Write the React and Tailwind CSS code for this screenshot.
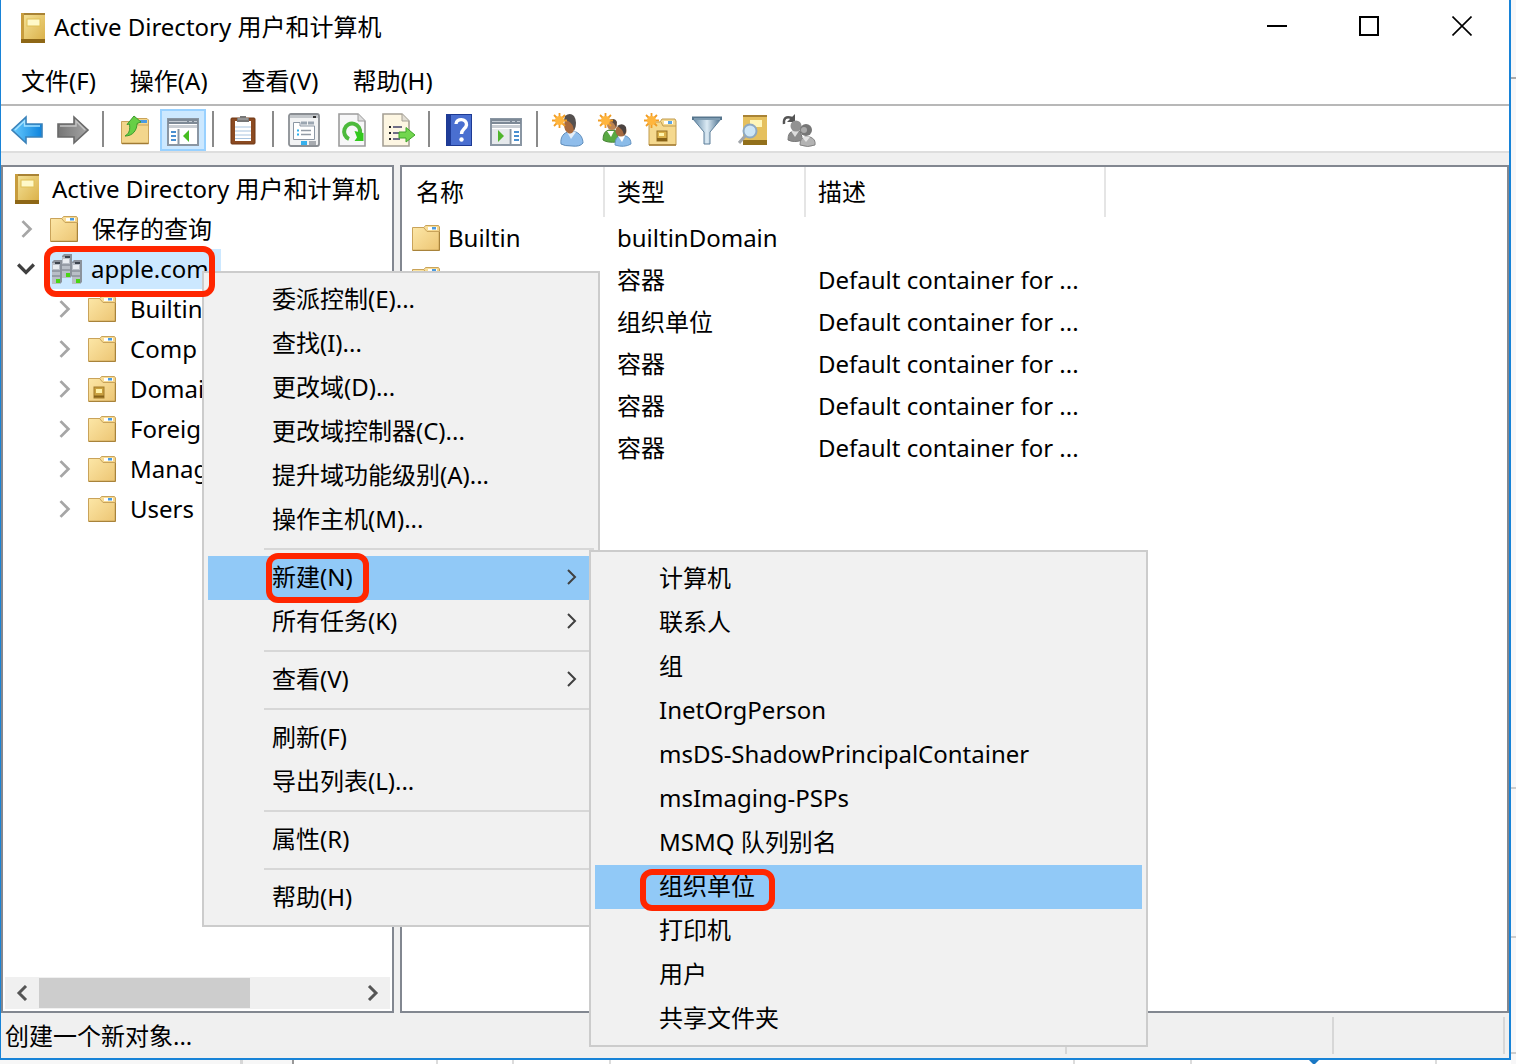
const BookIcon = ({ className = "w-[26px] h-[30px]" }) => (
  <svg viewBox="0 0 26 30" className={className} aria-hidden="true">
    <defs>
      <linearGradient id="book" x1="0" x2="1" y1="0" y2="1">
        <stop offset="0" stopColor="#f6e59c" />
        <stop offset="1" stopColor="#d9ae45" />
      </linearGradient>
    </defs>
    <rect x="1" y="0" width="24" height="30" fill="url(#book)" />
    <rect x="1" y="0" width="24" height="2" fill="#a98335" />
    <rect x="1" y="0" width="3" height="30" fill="#c79c3d" />
    <rect x="1" y="26" width="24" height="4" fill="#8e6716" />
    <rect x="7" y="6" width="13" height="7" fill="#fff9c9" stroke="#dfc056" />
  </svg>
);

const FolderIcon = ({ domain = false }) => (
  <svg viewBox="0 0 28 26" className="w-7 h-[26px] shrink-0" aria-hidden="true">
    <defs>
      <linearGradient id="folder" x1="0" x2="1" y1="0" y2="1">
        <stop offset="0" stopColor="#fde8a9" />
        <stop offset="1" stopColor="#ecc573" />
      </linearGradient>
    </defs>
    <path d="M.5 2.5H12L13.500 .5H26.500L27.500 2V25.500H.5Z" fill="url(#folder)" stroke="#c9a35a" />
    <path d="M12 3L15 6.500H27.500" fill="none" stroke="#c9a35a" />
    <rect x="16" y="2" width="9" height="3" fill="#fff" />
    <rect x="20" y="2" width="4" height="2.500" fill="#4c9be0" />
    <path d="M1 25.300H27.500M27.300 7V25" stroke="#a07b34" />
    {domain && (
      <g>
        <rect x="6" y="11" width="10" height="11" fill="#c9a040" stroke="#a47d2a" />
        <rect x="8" y="13" width="6" height="4" fill="#fff1a8" />
        <path d="M6 20.500H16" stroke="#86621a" strokeWidth="2" />
      </g>
    )}
  </svg>
);

const ServersIcon = () => (
  <svg viewBox="0 0 32 32" className="w-8 h-8 shrink-0" aria-hidden="true">
    {[[11, 1], [1, 7], [21, 7]].map(([x, y]) => (
      <g key={x}>
        <path d={`M${x} ${y + 2}L${x + 2} ${y}H${x + 10}V${y + 22}L${x + 8} ${y + 24}H${x}Z`} fill="#8b929b" />
        <rect x={x} y={y + 3} width="8" height="21" fill="#b9bfc7" />
        <rect x={x + 1} y={y + 5} width="6" height="4" fill="#e9edf1" />
        <rect x={x + 3} y={y + 2} width="5" height="2" fill="#3d444d" />
        <path d={`M${x} ${y + 11}H${x + 8}M${x} ${y + 16}H${x + 8}`} stroke="#747b84" />
        <rect x={x + 4} y={y + 19} width="4" height="4" fill="#49d414" />
      </g>
    ))}
  </svg>
);

const BackIcon = () => (
  <svg viewBox="0 0 32 30" className="w-8 h-[30px]" aria-hidden="true">
    <defs>
      <linearGradient id="back" x1="0" x2="1">
        <stop offset="0" stopColor="#69ccff" />
        <stop offset="1" stopColor="#0d83dd" />
      </linearGradient>
    </defs>
    <path d="M1 15L15 2V9H31V22H15V28Z" fill="url(#back)" stroke="#3b82b9" strokeWidth="1.600" />
    <path d="M4 15L13.500 6V11H29" fill="none" stroke="#a3e1ff" strokeWidth="1.400" />
  </svg>
);

const ForwardIcon = () => (
  <svg viewBox="0 0 32 30" className="w-8 h-[30px]" aria-hidden="true">
    <defs>
      <linearGradient id="forward" x1="0" x2="1">
        <stop offset="0" stopColor="#757575" />
        <stop offset="1" stopColor="#a5a5a5" />
      </linearGradient>
    </defs>
    <path d="M31 15L17 2V9H1V22H17V28Z" fill="url(#forward)" stroke="#696969" strokeWidth="1.600" />
    <path d="M3 11H19V6L28 15" fill="none" stroke="#c4c4c4" strokeWidth="1.400" />
  </svg>
);

const UpFolderIcon = () => (
  <svg viewBox="0 0 30 30" className="w-[30px] h-[30px]" aria-hidden="true">
    <path d="M1.500 6.500H15L17 3.500H27L28.500 5V28.500H1.500Z" fill="#f3d68c" stroke="#c9a35a" />
    <path d="M15 7L18 10H28.500" fill="none" stroke="#c9a35a" />
    <rect x="20" y="5" width="7" height="3" fill="#4c9be0" />
    <path d="M2 28.500H28.500" stroke="#a07b34" strokeWidth="1.500" />
    <path d="M5 21C10 18 10 14 9.500 9L7 9.500L14 1L21 7L17 8.500C17 15 13 21 5 21Z" fill="#67cf45" stroke="#3c9a2c" />
  </svg>
);

const ConsoleTreeIcon = ({ flip = false }) => (
  <svg viewBox="0 0 32 28" className="w-8 h-7 mt-1" aria-hidden="true">
    <rect x="1" y="1" width="30" height="26" fill="#fff" stroke="#8a96a3" strokeWidth="2" />
    <rect x="1" y="1" width="30" height="5" fill="#7d8996" />
    <path d="M2 3.500H20M22 3.500H25M27 3.500H30" stroke="#c4ccd4" />
    <path d="M2 8.500H30" stroke="#c9ced4" strokeWidth="3" />
    {flip ? (
      <g>
        <path d="M20.500 11V26" stroke="#8a96a3" strokeWidth="2" />
        <rect x="2" y="11" width="17" height="15" fill="#e6e9ec" />
        <path d="M24 14H29M24 18H29M24 22H29" stroke="#4a8fd0" strokeWidth="1.800" />
        <path d="M8 12L14 18L8 24Z" fill="#4fb52c" />
      </g>
    ) : (
      <g>
        <path d="M11.500 11V26" stroke="#8a96a3" strokeWidth="2" />
        <path d="M4 14H9M4 18H9M4 22H9" stroke="#4a8fd0" strokeWidth="1.800" />
        <path d="M22 12L16 18L22 24Z" fill="#45bd20" />
      </g>
    )}
  </svg>
);

const ClipboardIcon = () => (
  <svg viewBox="0 0 26 30" className="w-[26px] h-[30px]" aria-hidden="true">
    <rect x="1" y="3" width="24" height="26" rx="1" fill="#8b4a21" stroke="#6e3615" />
    <rect x="5" y="6" width="16" height="20" fill="#fff" />
    <path d="M5 12H21M5 16H21M5 20H21M5 23.500H21" stroke="#a9c4df" />
    <path d="M7 3H10V1H16V3H19V7H7Z" fill="#777" />
    <path d="M8 4H18" stroke="#b4b4b4" />
  </svg>
);

const PropertiesIcon = () => (
  <svg viewBox="0 0 32 34" className="w-8 h-[34px]" aria-hidden="true">
    <rect x="1" y="1" width="30" height="32" rx="2" fill="#f2f3f4" stroke="#8b8f94" strokeWidth="1.800" />
    <rect x="2" y="2" width="28" height="3" fill="#c3c7cb" />
    <path d="M25 4H28" stroke="#333" strokeWidth="2" />
    <path d="M5.500 9.500H12V13H26.500V26.500H5.500Z" fill="#fff" stroke="#8b96a3" />
    <path d="M13 10H19M20 10H26" stroke="#9ba6b1" strokeWidth="3" />
    <path d="M9 17.500H11M9 21.500H11" stroke="#2ab0ee" strokeWidth="2" />
    <path d="M13 17.500H23M13 21.500H23" stroke="#929ba5" strokeWidth="1.500" />
    <rect x="13" y="28" width="6" height="4" fill="#36b1ee" />
    <rect x="21" y="28" width="7" height="4" fill="#a7abb0" />
  </svg>
);

const RefreshIcon = () => (
  <svg viewBox="0 0 28 34" className="w-7 h-[34px]" aria-hidden="true">
    <path d="M1 1H20L27 8V33H1Z" fill="#f7f7f8" stroke="#9c9c9c" strokeWidth="1.600" />
    <path d="M20 1V8H27" fill="#ddd" stroke="#9c9c9c" />
    <path d="M11 26A8 8 0 1 1 22 20" fill="none" stroke="#4cba3c" strokeWidth="4" />
    <path d="M16.500 18L25.500 20V28H16.500L19 24.500Z" fill="#32c91e" />
  </svg>
);

const ExportIcon = () => (
  <svg viewBox="0 0 34 34" className="w-[34px] h-[34px]" aria-hidden="true">
    <path d="M1 1H20L27 8V33H1Z" fill="#fdf6e2" stroke="#a5a095" strokeWidth="1.600" />
    <path d="M20 1V8H27" fill="#e2ded4" stroke="#a5a095" />
    <path d="M7 14H9M7 20H9M7 26H9" stroke="#222" strokeWidth="2" />
    <path d="M11 14H20M11 20H18M11 26H18" stroke="#6f6d86" strokeWidth="1.800" />
    <path d="M17 19H24V14.500L33 22L24 29V25H17Z" fill="#73d64e" stroke="#3fa52b" />
  </svg>
);

const HelpIcon = () => (
  <svg viewBox="0 0 26 32" className="w-[26px] h-8" aria-hidden="true">
    <rect width="26" height="32" fill="#4a6fd0" />
    <rect width="5" height="32" fill="#1f3c98" />
    <rect x=".5" y=".5" width="25" height="31" fill="none" stroke="#1d3a94" />
    <path d="M10 10C10 4 21 4 20.500 11C20 15 15.500 15 15.500 20" fill="none" stroke="#fff" strokeWidth="3.400" />
    <circle cx="15.500" cy="25.500" r="2.200" fill="#fff" />
  </svg>
);

const Spark = () => (
  <g>
    <path d="M7.500 0V15M0 7.500H15M2 2L13 13M13 2L2 13" stroke="#f19d25" strokeWidth="1.800" />
    <circle cx="7.500" cy="7.500" r="4.500" fill="#ffb53d" />
  </g>
);

const NewUserIcon = () => (
  <svg viewBox="0 0 32 34" className="w-8 h-[34px]" aria-hidden="true">
    <path d="M9 31C8 24 12 19 17 19H24C29 21 31 26 31 30Q28 34 20 33Q12 33 9 31Z" fill="#8fbdeb" stroke="#5f8dbb" />
    <path d="M15 19L19 26L24 19Z" fill="#e4eef8" />
    <path d="M13 7H22Q25 12 22 17Q20 22 16 20Q12 17 12 12Z" fill="#a96a3e" />
    <path d="M13 3Q18-1 22 3Q26 9 22 18Q21 10 16 8L12 7Z" fill="#55504f" />
    <Spark />
  </svg>
);

const NewGroupIcon = () => (
  <svg viewBox="0 0 34 34" className="w-[34px] h-[34px]" aria-hidden="true">
    <path d="M5 27Q5 18 11 17H17L21 25L19 29Q9 30 5 27Z" fill="#58a942" stroke="#488336" />
    <path d="M9 18L13 24L16 18Z" fill="#fff" />
    <circle cx="14" cy="12" r="5" fill="#bd8453" />
    <path d="M11 7Q17 4 19 9L18 15Q17 10 11 7Z" fill="#5b4a40" />
    <path d="M17 32Q17 24 22 23H28Q33 25 33 31Q26 35 17 32Z" fill="#8bbce9" stroke="#6594c2" />
    <path d="M20 23L24 29L27 23Z" fill="#fff" />
    <circle cx="23" cy="18" r="5.500" fill="#a66a40" />
    <path d="M19 13Q25 9 28 14Q29 19 26 22Q25 16 19 13Z" fill="#4b4340" />
    <Spark />
  </svg>
);

const NewOuIcon = () => (
  <svg viewBox="0 0 34 34" className="w-[34px] h-[34px]" aria-hidden="true">
    <path d="M5 9H16L18 6H31L32 8V32H5Z" fill="#f5d98f" stroke="#c29c4f" />
    <path d="M17 9L19 13H32" fill="none" stroke="#c29c4f" />
    <rect x="20" y="8" width="9" height="3" fill="#fff" />
    <rect x="24" y="8" width="4" height="3" fill="#5ba6e5" />
    <rect x="13" y="18" width="10" height="10" fill="#dbb14b" stroke="#967124" />
    <rect x="15" y="20" width="5" height="3" fill="#fff5ad" />
    <path d="M13 26.500H23" stroke="#876217" strokeWidth="3" />
    <path d="M5 32H32" stroke="#a47d36" strokeWidth="1.500" />
    <Spark />
  </svg>
);

const FilterIcon = () => (
  <svg viewBox="0 0 30 30" className="w-[30px] h-[30px]" aria-hidden="true">
    <defs>
      <linearGradient id="funnel" x1="0" x2="1">
        <stop offset="0" stopColor="#6188a6" />
        <stop offset=".5" stopColor="#dcebf5" />
        <stop offset="1" stopColor="#486d8b" />
      </linearGradient>
    </defs>
    <path d="M1 4L12 17V29H18V17L29 4Z" fill="url(#funnel)" stroke="#5d7f9a" />
    <path d="M0 1.500H30V5H0Z" fill="#56758d" />
    <path d="M2 4H28" stroke="#a7c3d5" />
  </svg>
);

const FindIcon = () => (
  <svg viewBox="0 0 30 32" className="w-[30px] h-8" aria-hidden="true">
    <rect x="5" y="1" width="24" height="30" fill="#e5c05e" />
    <rect x="5" y="1" width="24" height="2" fill="#a98335" />
    <rect x="5" y="26" width="24" height="5" fill="#92701b" />
    <rect x="12" y="6" width="12" height="7" fill="#fff6b9" />
    <path d="M1 29L8 21" stroke="#a2a6aa" strokeWidth="3" />
    <circle cx="12" cy="17" r="6.500" fill="#cde6f7" stroke="#8fa9c1" strokeWidth="2" />
  </svg>
);

const AddToGroupIcon = () => (
  <svg viewBox="0 0 34 34" className="w-[34px] h-[34px]" aria-hidden="true">
    <path d="M2 11Q1 2 10 5" fill="none" stroke="#555" strokeWidth="2.400" />
    <path d="M13 1V9H5Z" fill="#555" />
    <path d="M6 27Q6 19 11 18H18L21 27Q12 30 6 27Z" fill="#8c8c8c" stroke="#777" />
    <path d="M9 18L13 24L17 18" fill="#ddd" />
    <circle cx="14" cy="13" r="5.500" fill="#929292" />
    <path d="M18 32Q18 25 23 24H28Q34 26 33 32Q26 35 18 32Z" fill="#b3b3b3" stroke="#838383" />
    <circle cx="24" cy="17" r="6" fill="#777" />
    <circle cx="22" cy="17" r="3" fill="#aaa" />
    <path d="M20 24L24 29L28 24" fill="#e4e4e4" />
  </svg>
);

const Chevron = ({ dir = "right", size = "w-4 h-4", className = "" }) => {
  const paths = {
    right: "M4 1L11 8L4 15",
    left: "M12 1L5 8L12 15",
    down: "M1 4L8 11L15 4",
  };
  return (
    <svg viewBox="0 0 16 16" className={`${size} shrink-0 ${className}`} fill="none" stroke="currentColor" aria-hidden="true">
      <path d={paths[dir]} />
    </svg>
  );
};

const menuBar = ["文件(F)", "操作(A)", "查看(V)", "帮助(H)"];

const tree = [
  { name: "Builtin" },
  { name: "Comp" },
  { name: "Domai", domain: true },
  { name: "Foreig" },
  { name: "Manag" },
  { name: "Users" },
];

const rows = [
  { name: "Builtin", type: "builtinDomain" },
  { type: "容器", desc: "Default container for ..." },
  { type: "组织单位", desc: "Default container for ..." },
  { type: "容器", desc: "Default container for ..." },
  { type: "容器", desc: "Default container for ..." },
  { type: "容器", desc: "Default container for ..." },
];

const contextMenu = [
  { label: "委派控制(E)..." },
  { label: "查找(I)..." },
  { label: "更改域(D)..." },
  { label: "更改域控制器(C)..." },
  { label: "提升域功能级别(A)..." },
  { label: "操作主机(M)..." },
  null,
  { label: "新建(N)", sub: true, active: true },
  { label: "所有任务(K)", sub: true },
  null,
  { label: "查看(V)", sub: true },
  null,
  { label: "刷新(F)" },
  { label: "导出列表(L)..." },
  null,
  { label: "属性(R)" },
  null,
  { label: "帮助(H)" },
];

const newMenu = [
  "计算机",
  "联系人",
  "组",
  "InetOrgPerson",
  "msDS-ShadowPrincipalContainer",
  "msImaging-PSPs",
  "MSMQ 队列别名",
  "组织单位",
  "打印机",
  "用户",
  "共享文件夹",
];

function TitleBar() {
  return (
    <header className="flex items-center h-14 pl-[19px] bg-white">
      <BookIcon />
      <h1 className="ml-2 pb-[2px] flex-1 whitespace-nowrap">Active Directory 用户和计算机</h1>
      <div className="flex h-full pb-1">
        <button aria-label="最小化" className="w-[92px] grid place-items-center">
          <svg viewBox="0 0 20 20" className="w-5 h-5" stroke="#000" strokeWidth="2"><path d="M0 10H20" /></svg>
        </button>
        <button aria-label="最大化" className="w-[92px] grid place-items-center">
          <svg viewBox="0 0 20 20" className="w-5 h-5" fill="none" stroke="#000" strokeWidth="2"><path d="M1 1H19V19H1Z" /></svg>
        </button>
        <button aria-label="关闭" className="w-[94px] grid place-items-center">
          <svg viewBox="0 0 20 20" className="w-5 h-5" stroke="#000" strokeWidth="1.600"><path d="M.5 .5L19.500 19.500M19.500 .5L.5 19.500" /></svg>
        </button>
      </div>
    </header>
  );
}

function ToolButton({ label, width = "w-[46px]", active = false, children }) {
  return (
    <button
      aria-label={label}
      className={`${width} h-[42px] shrink-0 grid place-items-center ${active ? "bg-[#cce8ff] border-2 border-[#99d1ff]" : ""}`}
    >
      {children}
    </button>
  );
}

const Divider = () => <span className="w-[2px] h-9 mx-[6px] mb-[2px] shrink-0 bg-[#8a8a8a]" />;

function Toolbar() {
  return (
    <div role="toolbar" className="flex items-center h-[47px] pl-[3px] pt-[3px] bg-white border-b-2 border-[#dedede]">
      <ToolButton label="后退"><BackIcon /></ToolButton>
      <ToolButton label="前进"><ForwardIcon /></ToolButton>
      <Divider />
      <ToolButton label="上一级" width="w-[50px]"><UpFolderIcon /></ToolButton>
      <ToolButton label="显示控制台树" active><ConsoleTreeIcon /></ToolButton>
      <Divider />
      <ToolButton label="粘贴"><ClipboardIcon /></ToolButton>
      <Divider />
      <ToolButton label="属性" width="w-12"><PropertiesIcon /></ToolButton>
      <ToolButton label="刷新" width="w-12"><RefreshIcon /></ToolButton>
      <ToolButton label="导出列表"><ExportIcon /></ToolButton>
      <Divider />
      <ToolButton label="帮助"><HelpIcon /></ToolButton>
      <ToolButton label="显示操作窗格" width="w-12"><ConsoleTreeIcon flip /></ToolButton>
      <Divider />
      <ToolButton label="新建用户" width="w-12"><NewUserIcon /></ToolButton>
      <ToolButton label="新建组"><NewGroupIcon /></ToolButton>
      <ToolButton label="新建组织单位"><NewOuIcon /></ToolButton>
      <ToolButton label="筛选器"><FilterIcon /></ToolButton>
      <ToolButton label="查找"><FindIcon /></ToolButton>
      <ToolButton label="添加到组"><AddToGroupIcon /></ToolButton>
    </div>
  );
}

function TreePane() {
  return (
    <nav className="flex flex-col w-[393px] shrink-0 bg-white border-2 border-[#828790] whitespace-nowrap">
      <ul className="flex-1 pt-[2px]">
        <li className="flex items-center h-10 pl-[11px] gap-3">
          <BookIcon />
          <span>Active Directory 用户和计算机</span>
        </li>
        <li className="flex items-center h-10 pl-[15px]">
          <Chevron size="w-[18px] h-[18px]" className="text-[#a6a6a6] stroke-[2.5]" />
          <span className="ml-[14px]"><FolderIcon /></span>
          <span className="ml-[14px]">保存的查询</span>
        </li>
        <li className="flex items-center h-10 pl-[14px]">
          <Chevron dir="down" size="w-[18px] h-[18px]" className="text-[#404040] stroke-3" />
          <span className="flex items-center h-10 ml-3 pl-1 pr-3 gap-2 bg-[#cce8ff]">
            <ServersIcon />
            apple.com
          </span>
        </li>
        {tree.map(({ name, domain }) => (
          <li key={name} className="flex items-center h-10 pl-[53px]">
            <Chevron size="w-[18px] h-[18px]" className="text-[#a6a6a6] stroke-[2.5]" />
            <span className="ml-[14px]"><FolderIcon domain={domain} /></span>
            <span className="ml-[14px]">{name}</span>
          </li>
        ))}
      </ul>
      <div className="flex items-center h-8 mx-[2px] mb-[2px] bg-[#f0f0f0] text-[#555]">
        <button aria-label="向左滚动" className="w-[34px] grid place-items-center"><Chevron dir="left" className="stroke-3" /></button>
        <span className="w-[211px] h-[30px] bg-[#cdcdcd]" />
        <button aria-label="向右滚动" className="w-[34px] ml-auto grid place-items-center"><Chevron className="stroke-3" /></button>
      </div>
    </nav>
  );
}

function ListPane() {
  return (
    <main className="flex-1 min-w-0 bg-white border-2 border-[#828790]">
      <table className="table-fixed border-collapse w-[703px] whitespace-nowrap">
        <colgroup>
          <col className="w-[202px]" />
          <col className="w-[201px]" />
          <col className="w-[300px]" />
        </colgroup>
        <thead>
          <tr className="h-[50px] text-left">
            <th className="font-normal pl-[14px] border-r-2 border-[#e5e5e5]">名称</th>
            <th className="font-normal pl-3 border-r-2 border-[#e5e5e5]">类型</th>
            <th className="font-normal pl-3 border-r-2 border-[#e5e5e5]">描述</th>
          </tr>
        </thead>
        <tbody>
          {rows.map(({ name, type, desc }, i) => (
            <tr key={i} className="h-[42px]">
              <td className="pl-[10px]">
                <span className="flex items-center gap-2"><FolderIcon />{name}</span>
              </td>
              <td className="pl-[13px]">{type}</td>
              <td className="pl-[13px]">{desc}</td>
            </tr>
          ))}
        </tbody>
      </table>
    </main>
  );
}

const Mark = ({ className }) => (
  <span className={`absolute border-[6px] border-[#ff2600] rounded-xl pointer-events-none ${className}`} />
);

function ContextMenu() {
  return (
    <div role="menu" className="absolute left-[202px] top-[271px] w-[398px] px-1 py-[5px] bg-[#f1f1f1] border-2 border-[#cccccc]">
      {contextMenu.map((item, i) =>
        item ? (
          <button
            key={item.label}
            role="menuitem"
            className={`flex items-center w-full h-11 pl-16 pr-[14px] pb-[2px] text-left ${item.active ? "bg-[#91c9f7]" : ""}`}
          >
            <span className="flex-1">{item.label}</span>
            {item.sub && <Chevron className="text-[#404040] stroke-2" />}
          </button>
        ) : (
          <div key={i} className="flex items-center h-[14px] pl-14"><hr className="flex-1 border-0 h-[2px] bg-[#d7d7d7]" /></div>
        )
      )}
    </div>
  );
}

function NewSubmenu() {
  return (
    <div role="menu" className="absolute left-[589px] top-[550px] w-[559px] px-1 pt-[5px] pb-1 bg-[#f1f1f1] border-2 border-[#cccccc]">
      {newMenu.map((label) => (
        <button
          key={label}
          role="menuitem"
          className={`flex items-center w-full h-11 pl-16 pb-[2px] text-left ${label === "组织单位" ? "bg-[#91c9f7]" : ""}`}
        >
          {label}
        </button>
      ))}
    </div>
  );
}

function StatusBar() {
  return (
    <footer className="flex h-[45px] bg-[#f0f0f0]">
      <p className="flex-1 pl-1 leading-[46px]">创建一个新对象...</p>
      <span className="w-[267px] my-1 border-l-2 border-[#d7d7d7]" />
      <span className="w-[173px] my-1 mr-1 border-x-2 border-[#d7d7d7]" />
    </footer>
  );
}

// edges of the sheet that lies behind the window
function SheetBottom() {
  return (
    <div className="flex h-1 bg-white">
      <span className="w-[243px] border-r-3 border-[#d7d7d7] bg-[#f7f7f7]" />
      <span className="w-[51px] border-r-2 border-[#999] bg-[#f7f7f7]" />
      <span className="w-36 border-r-2 border-[#dcdcdc]" />
      <span className="w-[76px] border-r-2 border-[#dcdcdc]" />
      <span className="w-[97px] border-r-2 border-[#dcdcdc]" />
      <span className="w-[464px] border-r-2 border-[#dcdcdc]" />
      <span className="w-[117px] border-r-2 border-[#dcdcdc]" />
      <span className="flex-1 grid place-items-center">
        <svg viewBox="0 0 10 4" className="w-[10px] h-1" aria-hidden="true"><path d="M0 0H10L6 4H4Z" fill="#1a78c4" /></svg>
      </span>
      <span className="w-[76px] border-l-2 border-[#dcdcdc]" />
    </div>
  );
}

function SheetRight() {
  return (
    <div className="flex flex-col w-[5px] shrink-0 bg-[#f7f7f8]">
      <span className="h-[79px] border-b-2 border-[#aaa]" />
      <span className="h-[710px] border-b-2 border-[#ccc]" />
      <span className="h-[149px] border-b-2 border-[#ccc]" />
      <span className="h-[116px] border-b-2 border-[#ccc]" />
    </div>
  );
}

export default function App() {
  return (
    <div className="relative min-h-screen flex text-2xl leading-8 text-black font-['Noto_Sans','Noto_Sans_CJK_SC',sans-serif]">
      <div className="flex-1 min-w-0 flex flex-col">
        <div className="flex-1 flex flex-col bg-[#f0f0f0] border-l border-r-2 border-b-2 border-[#1883d7]">
          <TitleBar />
          <nav className="flex items-center h-12 pl-5 pt-[2px] gap-[34px] bg-white whitespace-nowrap">
            {menuBar.map((label) => (
              <button key={label}>{label}</button>
            ))}
          </nav>
          <div className="h-[2px] bg-[#b8b8b8]" />
          <Toolbar />
          <div className="flex-1 flex gap-[6px] pt-3">
            <TreePane />
            <ListPane />
          </div>
          <StatusBar />
        </div>
        <SheetBottom />
      </div>
      <SheetRight />

      <ContextMenu />
      <NewSubmenu />
      <Mark className="left-[44px] top-[246px] w-[171px] h-[51px]" />
      <Mark className="left-[266px] top-[553px] w-[103px] h-[50px]" />
      <Mark className="left-[640px] top-[869px] w-[135px] h-[42px]" />
    </div>
  );
}
